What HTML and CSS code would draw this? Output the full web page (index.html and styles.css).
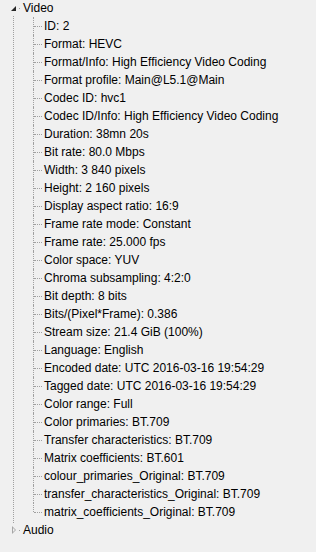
FILE: index.html
```html
<!DOCTYPE html>
<html lang="en">
<head>
    <meta charset="UTF-8">
    <title>Media info</title>
    <link rel="stylesheet" href="styles.css">
</head>
<body>
    <div class="tree">
        <div class="top open">
            <div class="row"><span class="arrow down"></span><span class="dash"></span>Video</div>
            <ul class="kids">
                <li>ID: 2</li>
                <li>Format: HEVC</li>
                <li>Format/Info: High Efficiency Video Coding</li>
                <li>Format profile: Main@L5.1@Main</li>
                <li>Codec ID: hvc1</li>
                <li>Codec ID/Info: High Efficiency Video Coding</li>
                <li>Duration: 38mn 20s</li>
                <li>Bit rate: 80.0 Mbps</li>
                <li>Width: 3 840 pixels</li>
                <li>Height: 2 160 pixels</li>
                <li>Display aspect ratio: 16:9</li>
                <li>Frame rate mode: Constant</li>
                <li>Frame rate: 25.000 fps</li>
                <li>Color space: YUV</li>
                <li>Chroma subsampling: 4:2:0</li>
                <li>Bit depth: 8 bits</li>
                <li>Bits/(Pixel*Frame): 0.386</li>
                <li>Stream size: 21.4 GiB (100%)</li>
                <li>Language: English</li>
                <li>Encoded date: UTC 2016-03-16 19:54:29</li>
                <li>Tagged date: UTC 2016-03-16 19:54:29</li>
                <li>Color range: Full</li>
                <li>Color primaries: BT.709</li>
                <li>Transfer characteristics: BT.709</li>
                <li>Matrix coefficients: BT.601</li>
                <li>colour_primaries_Original: BT.709</li>
                <li>transfer_characteristics_Original: BT.709</li>
                <li>matrix_coefficients_Original: BT.709</li>
            </ul>
        </div>
        <div class="top">
            <div class="row"><span class="arrow right"></span><span class="dash"></span>Audio</div>
        </div>
    </div>
</body>
</html>
```
FILE: styles.css
```css
html{
    background-color: #f0f0f0;
}

body{
    margin: 0;
    font-family: Tahoma, 'Liberation Sans', Arial, sans-serif;
    font-size: 12px;
    color: #000;
}

.tree{
    margin-top: -1px;
}

.row{
    height: 18px;
    line-height: 18px;
    display: flex;
    align-items: center;
    padding-left: 11px;
}

/* expander glyphs */
.arrow.down{
    width: 0;
    height: 0;
    border-left: 5px solid transparent;
    border-bottom: 5px solid #262626;
    margin: 0 3px 0 0;
}
.arrow.right{
    width: 0;
    height: 0;
    border-top: 4px solid transparent;
    border-bottom: 4px solid transparent;
    border-left: 4px solid #a6a6a6;
    position: relative;
    margin: 0 3px 0 1px;
}
.arrow.right::after{
    content: "";
    position: absolute;
    left: -3px;
    top: -2px;
    border-top: 2px solid transparent;
    border-bottom: 2px solid transparent;
    border-left: 2px solid #f0f0f0;
}

.dash{
    width: 1px;
    height: 1px;
    background-color: #a0a0a0;
    margin-right: 3px;
}

.top.open{
    position: relative;
}
.top.open::before{
    content: "";
    position: absolute;
    left: 13px;
    top: 17px;
    bottom: -2px;
    border-left: 1px dotted #a0a0a0;
}

.kids{
    list-style: none;
    margin: 0;
    padding: 0 0 0 33px;
}
.kids li{
    position: relative;
    height: 18px;
    line-height: 18px;
    padding-left: 11px;
    white-space: nowrap;
}
.kids li::before{
    content: "";
    position: absolute;
    left: 0;
    top: 0;
    height: 18px;
    border-left: 1px dotted #a0a0a0;
}
.kids li:last-child::before{
    height: 9px;
}
.kids li::after{
    content: "";
    position: absolute;
    left: 1px;
    top: 9px;
    width: 8px;
    border-top: 1px dotted #a0a0a0;
}
```
